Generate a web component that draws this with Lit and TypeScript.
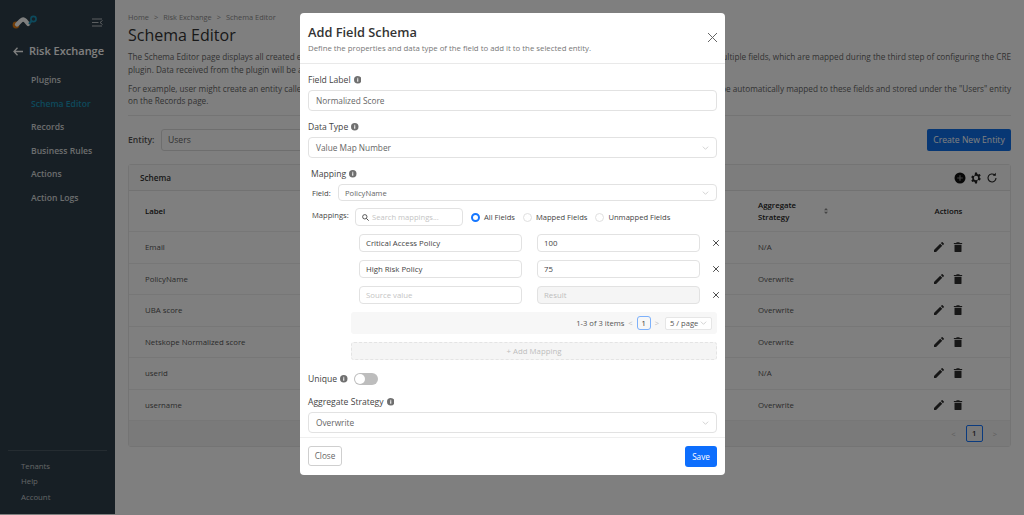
import { LitElement, html, css, svg } from 'lit';
import { customElement } from 'lit/decorators.js';

const NAV = ['Plugins', 'Schema Editor', 'Records', 'Business Rules', 'Actions', 'Action Logs'];
const FOOT = ['Tenants', 'Help', 'Account'];
const ROWS = [
  ['Email', 'N/A'],
  ['PolicyName', 'Overwrite'],
  ['UBA score', 'Overwrite'],
  ['Netskope Normalized score', 'Overwrite'],
  ['userid', 'N/A'],
  ['username', 'Overwrite'],
];

const info = html`<svg class="info" viewBox="0 0 10 10"><circle cx="5" cy="5" r="5" fill="#6f6f6f"/><rect x="4.3" y="4.2" width="1.4" height="3.4" fill="#fff"/><rect x="4.3" y="2.4" width="1.4" height="1.2" fill="#fff"/></svg>`;
const chevron = html`<svg class="chev" viewBox="0 0 10 6"><path d="M1 1l4 4 4-4" fill="none" stroke="#bdbdbd" stroke-width="1"/></svg>`;
const cross = html`<svg class="x" viewBox="0 0 10 10"><path d="M1.5 1.5l7 7M8.5 1.5l-7 7" stroke="#444" stroke-width="1.2"/></svg>`;
const sorter = svg`<path d="M3 0l3 3.4H0zM3 9L0 5.6h6z" fill="#8a8a8a"/>`;
const pencil = html`<svg class="act" viewBox="0 0 12 12"><path d="M0 12V9.5L7.4 2.1l2.5 2.5L2.5 12zM8.2 1.3L9.3.2a.7.7 0 011 0l1.5 1.5a.7.7 0 010 1l-1.1 1.1z" fill="#2f2f2f"/></svg>`;
const trash = html`<svg class="act" viewBox="0 0 10 12"><path d="M0 1.2h2.8L3.4.4h3.2l.6.8H10v1.3H0zM.8 3.3h8.4V11a1 1 0 01-1 1H1.8a1 1 0 01-1-1z" fill="#2f2f2f"/></svg>`;

@customElement('app-root')
export class AppRoot extends LitElement {
  static styles = css`
    :host {
      display: block;
      position: relative;
      width: 1024px;
      height: 515px;
      overflow: hidden;
      font-family: "Open Sans", "Noto Sans", sans-serif;
      color: #333;
      background: #fff;
    }
    .page { display: flex; height: 514px; }
    .side {
      width: 115px;
      flex: none;
      background: #2f3f4a;
      display: flex;
      flex-direction: column;
      color: #fff;
    }
    .logo { display: flex; align-items: center; justify-content: space-between; padding: 14px 12px 0 12px; height: 30px; box-sizing: content-box; height: 16px; }
    .logo svg:first-child { width: 26px; height: 14px; }
    .logo svg:last-child { width: 11px; height: 9px; }
    .back { display: flex; align-items: center; gap: 6px; margin: 13px 0 0 13px; font-size: 11px; font-weight: 600; line-height: 16px; white-space: nowrap; }
    .back svg { width: 10px; height: 9px; }
    .nav { display: flex; flex-direction: column; margin: 10px 0 0 31px; gap: 0; flex: 1; }
    .nav span { height: 23.5px; line-height: 23.5px; font-size: 8.6px; font-weight: 600; color: #d7dadc; white-space: nowrap; }
    .nav span.on { color: #1a93b8; }
    .foot { margin: 0 8px; border-top: 1px solid #4a5862; padding: 8px 0 9px 13px; display: flex; flex-direction: column; }
    .foot span { font-size: 7.8px; line-height: 15.5px; color: #c4c9cc; }

    .main { flex: 1; padding: 12px 13px 0 13px; background: #fff; min-width: 0; }
    .crumbs { font-size: 7.4px; line-height: 10px; color: #8d8d8d; word-spacing: 0; white-space: nowrap; }
    .crumbs i { font-style: normal; margin: 0 5px; }
    h1 { font-size: 16px; font-weight: 400; line-height: 22px; margin: 2px 0 0; color: #333; }
    .desc { margin: 5px 0 0; font-size: 8.2px; line-height: 12.8px; color: #666; }
    .desc + .desc { margin-top: 6px; }
    .line { display: flex; justify-content: space-between; white-space: nowrap; }
    .rule { border-top: 1px solid #e8e8e8; margin: 7px 0 13px; }
    .entity { display: flex; align-items: center; height: 22px; font-size: 8.6px; }
    .entity b { font-weight: 600; color: #555; width: 33px; }
    .entity .sel { width: 400px; height: 20px; border: 1px solid #ddd; border-radius: 3px; padding-left: 6px; line-height: 20px; color: #666; }
    .entity .new { margin-left: auto; width: 84px; height: 22px; line-height: 22px; border-radius: 2px; background: #0f6fe8; color: #fff; text-align: center; font-size: 8.6px; }
    .card { margin-top: 13px; border: 1px solid #e8e8e8; border-radius: 3px; }
    .card-head { height: 25px; display: flex; align-items: center; justify-content: space-between; padding: 0 12px 0 11px; background: #fafafa; border-bottom: 1px solid #e4e4e4; font-size: 8.2px; font-weight: 600; }
    .tools { display: flex; align-items: center; gap: 4px; }
    .tools svg { width: 12px; height: 12px; }
    .thead, .row { display: grid; grid-template-columns: 613px 1fr 100px; align-items: center; font-size: 7.8px; padding-left: 16px; }
    .thead { height: 41px; font-weight: 600; color: #222; border-bottom: 1px solid #eee; box-sizing: border-box; line-height: 12px; }
    .thead .agg { display: flex; align-items: center; gap: 0; justify-content: space-between; width: 70px; }
    .thead svg { width: 4px; height: 8px; }
    .thead .sort2 { position: absolute; }
    .thead .act-h { text-align: center; padding-right: 23px; }
    .row { height: 31.5px; color: #555; border-bottom: 1px solid #eee; box-sizing: border-box; }
    .row .acts { display: flex; justify-content: center; gap: 9px; padding-right: 24px; }
    .act { width: 10px; height: 10px; }
    .pager { height: 25px; background: #f4f4f4; display: flex; align-items: center; justify-content: flex-end; gap: 10px; padding-right: 13px; font-size: 7.6px; }
    .pager .cur { width: 15px; height: 15px; line-height: 15px; text-align: center; border: 1px solid #1677ff; border-radius: 2px; font-weight: 600; color: #333; }
    .pager em { font-style: normal; color: #bdbdbd; }

    .shade { position: absolute; inset: 0; background: rgba(0, 0, 0, 0.5); }
    .dialog {
      position: absolute;
      left: 300px;
      top: 13px;
      width: 425px;
      height: 462px;
      background: #fff;
      border-radius: 4px;
      display: flex;
      flex-direction: column;
      color: #555;
    }
    .d-head { position: relative; height: 51px; border-bottom: 1px solid #e9e9e9; padding: 10px 8px 0; box-sizing: border-box; flex: none; }
    .d-head h2 { margin: 0; font-size: 12.8px; line-height: 18px; font-weight: 600; color: #333; }
    .d-head p { margin: 2px 0 0; font-size: 7.8px; line-height: 11px; color: #777; }
    .d-head svg { position: absolute; right: 7px; top: 19px; width: 11px; height: 11px; }
    .d-body { flex: 1; padding: 0 8px; display: flex; flex-direction: column; font-size: 8.3px; }
    .lab { display: flex; align-items: center; gap: 3px; height: 12px; font-size: 8.6px; color: #444; }
    .info { width: 7.5px; height: 7.5px; }
    .box { border: 1px solid #e2e2e2; border-radius: 4px; box-sizing: border-box; display: flex; align-items: center; justify-content: space-between; padding: 0 7px; color: #666; font-size: 8.3px; background: #fff; }
    .chev { width: 7px; height: 4px; }
    .f1 { margin-top: 10px; }
    .tall { height: 21px; margin-top: 4px; }
    .map-lab { margin: 10px 0 0 3px; }
    .field { display: flex; align-items: center; margin-top: 4px; height: 17px; font-size: 7.6px; color: #444; }
    .field > span { width: 26px; padding-left: 4px; white-space: nowrap; }
    .field .box { flex: 1; height: 17px; font-size: 7.6px; padding-left: 6px; margin-left: 0; }
    .maps { display: flex; align-items: center; margin-top: 7px; height: 18px; font-size: 7.6px; color: #444; }
    .maps > span { width: 43px; padding-left: 4px; white-space: nowrap; margin-top: -4px; }
    .search { width: 108px; height: 18px; padding: 0 6px; justify-content: flex-start; gap: 3px; color: #c4c4c4; font-size: 7.6px; }
    .search svg { width: 7px; height: 7px; flex: none; }
    .radios { display: flex; align-items: center; margin-left: 8px; gap: 8px; }
    .radio { display: flex; align-items: center; gap: 4px; white-space: nowrap; }
    .dot { width: 9px; height: 9px; border-radius: 50%; border: 1px solid #e0e0e0; box-sizing: border-box; }
    .dot.on { border: 2.5px solid #1677ff; background: #fff; }
    .pairs { display: flex; flex-direction: column; gap: 8px; margin: 8px 0 0 51px; }
    .pair { display: grid; grid-template-columns: 163px 163px 10px; column-gap: 15px; align-items: center; height: 18px; margin-top: 0; }
    .pair .box { height: 18px; font-size: 7.8px; padding: 0 6px; color: #444; }
    .pair .ph { color: #c4c4c4; }
    .pair .off { background: #f5f5f5; color: #bdbdbd; }
    .x { width: 8px; height: 8px; margin-left: -3px; }
    .strip { margin: 8px 0 0 43px; height: 22px; background: #f7f7f7; border-radius: 3px; display: flex; align-items: center; justify-content: flex-end; padding-right: 5px; font-size: 7.6px; color: #555; }
    .strip em { font-style: normal; color: #c0c0c0; margin: 0 4px; }
    .strip .cur { width: 12px; height: 12px; border: 1px solid #7db1fb; border-radius: 3px; text-align: center; line-height: 12px; color: #333; }
    .strip .size { display: flex; align-items: center; justify-content: space-between; width: 47px; height: 13px; border: 1px solid #e6e6e6; border-radius: 2px; background: #fff; padding: 0 4px; box-sizing: border-box; margin-left: 2px; }
    .add { margin: 8px 0 0 43px; height: 18px; box-sizing: border-box; line-height: 16px; border: 1px dashed #e4e4e4; border-radius: 3px; background: #f5f5f5; text-align: center; color: #bdbdbd; font-size: 7.8px; }
    .uniq { display: flex; align-items: center; margin-top: 12px; height: 14px; gap: 3px; font-size: 8.6px; color: #444; }
    .toggle { width: 24px; height: 12px; border-radius: 6px; background: #bdbdbd; margin-left: 3px; position: relative; }
    .toggle::after { content: ""; position: absolute; left: 1px; top: 1px; width: 10px; height: 10px; border-radius: 50%; background: #fff; }
    .d-foot { height: 38px; flex: none; border-top: 1px solid #efefef; display: flex; justify-content: space-between; padding: 8px 8px 0; box-sizing: border-box; }
    .btn { border-radius: 3px; font-size: 8.2px; text-align: center; box-sizing: border-box; }
    .close { width: 34px; height: 20px; line-height: 18px; border: 1px solid #cfcfcf; color: #666; }
    .save { width: 32px; height: 21px; line-height: 21px; background: #0d6efd; color: #fff; }
  `;

  render() {
    return html`
      <div class="page">
        <aside class="side">
          <div class="logo">
            <svg viewBox="0 0 26 14">
              <circle cx="4" cy="10" r="3.4" fill="#e07b12"/>
              <path d="M5 9.5L9 5.5c1.5-1.4 3-1.2 4.200 0l3 3.500" fill="none" stroke="#fff" stroke-width="4.200" stroke-linecap="round"/>
              <path d="M17 9l2.500-3" stroke="#1a93b8" stroke-width="2"/>
              <circle cx="21.500" cy="4" r="2.600" fill="none" stroke="#1a93b8" stroke-width="1.600"/>
            </svg>
            <svg viewBox="0 0 11 9"><path d="M0 1h10M0 4.500h6.500M0 8h10M10.500 2.500L8 4.500l2.500 2" fill="none" stroke="#c9cdd0" stroke-width="0.900"/></svg>
          </div>
          <div class="back">
            <svg viewBox="0 0 10 9"><path d="M4.500.7L1 4.500l3.500 3.800M1 4.500h9" fill="none" stroke="#fff" stroke-width="1.300"/></svg>
            Risk Exchange
          </div>
          <div class="nav">
            ${NAV.map(n => html`<span class=${n === 'Schema Editor' ? 'on' : ''}>${n}</span>`)}
          </div>
          <div class="foot">${FOOT.map(f => html`<span>${f}</span>`)}</div>
        </aside>
        <main class="main">
          <div class="crumbs">Home<i>&gt;</i>Risk Exchange<i>&gt;</i>Schema Editor</div>
          <h1>Schema Editor</h1>
          <div class="desc">
            <div class="line"><span>The Schema Editor page displays all created entities</span><span>multiple fields, which are mapped during the third step of configuring the CRE</span></div>
            <div class="line"><span>plugin. Data received from the plugin will be aligned</span></div>
          </div>
          <div class="desc">
            <div class="line"><span>For example, user might create an entity called "Users"</span><span>will be automatically mapped to these fields and stored under the "Users" entity</span></div>
            <div class="line"><span>on the Records page.</span></div>
          </div>
          <div class="rule"></div>
          <div class="entity">
            <b>Entity:</b><div class="sel">Users</div>
            <div class="new">Create New Entity</div>
          </div>
          <section class="card">
            <div class="card-head">
              <span>Schema</span>
              <div class="tools">
                <svg viewBox="0 0 12 12"><circle cx="6" cy="6" r="5.500" fill="#111"/><path d="M6 3.200v5.600M3.200 6h5.600" stroke="#888" stroke-width="1.200"/></svg>
                <svg viewBox="0 0 12 12"><path d="M6 3.800a2.200 2.200 0 100 4.400 2.200 2.200 0 000-4.400zM5 .5h2l.3 1.500 1 .5 1.400-.6 1 1.700-1.100 1 .1 1.200 1.100 1-1 1.700-1.400-.6-1 .5L7 11.500H5l-.3-1.500-1-.5-1.400.6-1-1.700 1.100-1-.1-1.200-1.100-1 1-1.700 1.400.6 1-.5z" fill="#222" fill-rule="evenodd"/></svg>
                <svg viewBox="0 0 12 12"><path d="M10 6a4 4 0 11-1.300-3" fill="none" stroke="#222" stroke-width="1.100"/><path d="M9.800.8v3h-3z" fill="#222"/></svg>
              </div>
            </div>
            <div class="thead">
              <span>Label</span>
              <span class="agg"><span>Aggregate<br>Strategy</span><svg viewBox="0 0 6 9">${sorter}</svg></span>
              <span class="act-h">Actions</span>
            </div>
            ${ROWS.map(r => html`
              <div class="row">
                <span>${r[0]}</span><span>${r[1]}</span>
                <span class="acts">${pencil}${trash}</span>
              </div>`)}
            <div class="pager"><em>&lt;</em><span class="cur">1</span><em>&gt;</em></div>
          </section>
        </main>
      </div>
      <div class="shade"></div>
      <div class="dialog">
        <div class="d-head">
          <h2>Add Field Schema</h2>
          <p>Define the properties and data type of the field to add it to the selected entity.</p>
          <svg viewBox="0 0 11 11"><path d="M1 1l9 9M10 1l-9 9" stroke="#666" stroke-width="1"/></svg>
        </div>
        <div class="d-body">
          <div class="lab f1">Field Label ${info}</div>
          <div class="box tall">Normalized Score</div>
          <div class="lab f1">Data Type ${info}</div>
          <div class="box tall">Value Map Number ${chevron}</div>
          <div class="lab map-lab">Mapping ${info}</div>
          <div class="field"><span>Field:</span><div class="box">PolicyName ${chevron}</div></div>
          <div class="maps">
            <span>Mappings:</span>
            <div class="box search">
              <svg viewBox="0 0 8 8"><circle cx="3.200" cy="3.200" r="2.500" fill="none" stroke="#444" stroke-width="1"/><path d="M5 5l2.600 2.600" stroke="#444" stroke-width="1.100"/></svg>
              Search mappings...
            </div>
            <div class="radios">
              <label class="radio"><i class="dot on"></i>All Fields</label>
              <label class="radio"><i class="dot"></i>Mapped Fields</label>
              <label class="radio"><i class="dot"></i>Unmapped Fields</label>
            </div>
          </div>
          <div class="pairs">
            <div class="pair"><div class="box">Critical Access Policy</div><div class="box">100</div>${cross}</div>
            <div class="pair"><div class="box">High Risk Policy</div><div class="box">75</div>${cross}</div>
            <div class="pair"><div class="box ph">Source value</div><div class="box off">Result</div>${cross}</div>
          </div>
          <div class="strip">
            1-3 of 3 items<em>&lt;</em><span class="cur">1</span><em>&gt;</em>
            <span class="size">5 / page ${chevron}</span>
          </div>
          <div class="add">+ Add Mapping</div>
          <div class="uniq">Unique ${info}<div class="toggle"></div></div>
          <div class="lab f1">Aggregate Strategy ${info}</div>
          <div class="box tall">Overwrite ${chevron}</div>
        </div>
        <div class="d-foot">
          <div class="btn close">Close</div>
          <div class="btn save">Save</div>
        </div>
      </div>
    `;
  }
}
